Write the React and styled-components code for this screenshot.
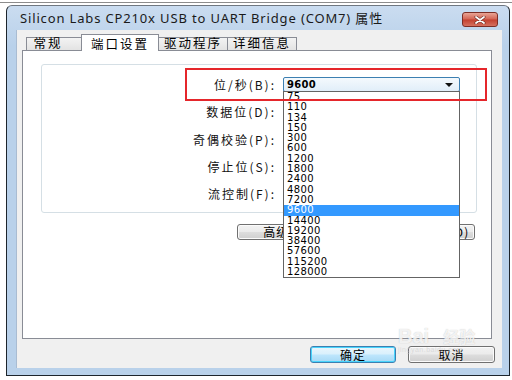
import React from 'react';
import styled, { createGlobalStyle } from 'styled-components';

const CJK = `"Noto Sans CJK SC", "Noto Sans", sans-serif`;

const GlobalStyle = createGlobalStyle`
  html, body {
    margin: 0;
    padding: 0;
    background: #fff;
  }
  body {
    width: 512px;
    height: 380px;
    overflow: hidden;
  }
`;

const Page = styled.div`
  position: relative;
  width: 512px;
  height: 380px;
  padding-top: 2px;
  box-sizing: border-box;
  background: #fff;
`;

const TopRule = styled.div`
  height: 1px;
  background: #8c8c8c;
`;

const Window = styled.div`
  margin: 2px 0 0 6px;
  width: 504px;
  height: 371px;
  box-sizing: border-box;
  border: 1px solid #1d252c;
  border-top-color: #6f7780;
  border-radius: 6px 6px 0 0;
  background: linear-gradient(#cadcf0, #b9d1ea 40px);
  display: flex;
  flex-direction: column;
`;

const TitleBar = styled.div`
  height: 24px;
  flex: none;
  display: flex;
  align-items: center;
  padding: 0 11px 0 13px;
`;

const Title = styled.div`
  flex: 1;
  font-family: "Noto Sans", ${CJK};
  font-size: 13px;
  letter-spacing: 0.85px;
  color: #1a1a1a;
  white-space: nowrap;
  margin-top: -1px;
`;

const CloseButton = styled.div`
  width: 36px;
  height: 15px;
  margin-top: 3px;
  box-sizing: border-box;
  border: 1px solid #7c2e26;
  border-radius: 3px;
  background: linear-gradient(#e9a495, #d36352 48%, #c3402f 52%, #d5705f);
  display: flex;
  align-items: center;
  justify-content: center;
`;

const Client = styled.div`
  flex: 1;
  margin: 0 7px 7px 9px;
  background: #f0f0f0;
  border-left: 1px solid #a9bcd2;
  padding: 4px 0 0 5px;
  display: flex;
  flex-direction: column;
`;

const TabStrip = styled.div`
  position: relative;
  z-index: 2;
  height: 16px;
  display: flex;
  align-items: flex-end;
  padding-left: 4px;
`;

const Tab = styled.div`
  width: ${p => p.$w}px;
  height: ${p => (p.$active ? 17 : 13)}px;
  margin-bottom: ${p => (p.$active ? -1 : 0)}px;
  margin-left: ${p => (p.$first ? 0 : -1)}px;
  box-sizing: border-box;
  border: 1px solid #898c95;
  border-bottom: none;
  background: ${p => (p.$active ? '#fff' : 'linear-gradient(#f3f3f3, #e3e3e3)')};
  position: relative;
  z-index: ${p => (p.$active ? 2 : 1)};
  display: flex;
  align-items: flex-end;
  justify-content: center;
  padding-right: ${p => p.$shift || 0}px;
  font-family: ${CJK};
  font-size: 12.5px;
  letter-spacing: 2px;
  line-height: 14px;
  color: #000;
`;

const Panel = styled.div`
  width: 470px;
  height: 289px;
  box-sizing: border-box;
  border: 1px solid #898c95;
  background: #fff;
  padding: 13px 0 0 18px;
  display: flex;
  flex-direction: column;
`;

const GroupBox = styled.div`
  width: 436px;
  height: 149px;
  box-sizing: border-box;
  border: 1px solid #d5dfe5;
  border-radius: 3px;
  padding-top: 12px;
`;

const Form = styled.div`
  display: grid;
  grid-template-columns: 232px 177px;
  column-gap: 9px;
  row-gap: 12.3px;
  align-items: center;
`;

const Label = styled.div`
  text-align: right;
  margin-right: -2px;
  font-family: ${CJK};
  font-size: 12px;
  letter-spacing: 2px;
  line-height: 15px;
  color: #111;
  white-space: nowrap;
`;

const Combo = styled.div`
  position: relative;
  height: 15px;
  box-sizing: border-box;
  border: 1px solid ${p => (p.$focused ? '#3c7fb1' : '#8e8f8f')};
  border-radius: 2px;
  background: ${p => (p.$focused ? 'linear-gradient(#f4f9fd, #e1eef9)' : 'linear-gradient(#f2f2f2, #dcdcdc)')};
  display: flex;
  align-items: center;
  padding: 0 6px 0 3px;
  font-family: "DejaVu Sans", sans-serif;
  font-weight: bold;
  font-size: 10px;
  color: #000;
`;

const ComboValue = styled.span`
  flex: 1;
  letter-spacing: 0.3px;
`;

const Arrow = styled.span`
  width: 0;
  height: 0;
  border-left: 4px solid transparent;
  border-right: 4px solid transparent;
  border-top: 4px solid #111;
`;

const DropList = styled.div`
  position: absolute;
  z-index: 5;
  top: 100%;
  left: -1px;
  width: 177px;
  box-sizing: border-box;
  border: 1px solid #646464;
  background: #fff;
  font-family: "DejaVu Sans", sans-serif;
  font-weight: normal;
`;

const DropItem = styled.div`
  height: 10.3px;
  line-height: 10.3px;
  padding-left: 3px;
  font-size: 10px;
  letter-spacing: 0.4px;
  color: ${p => (p.$selected ? '#fff' : '#000')};
  background: ${p => (p.$selected ? '#3399ff' : 'transparent')};
`;

const ButtonRow = styled.div`
  margin-top: 11px;
  width: 434px;
  display: flex;
  justify-content: flex-end;
  gap: 8px;
`;

const Button = styled.div`
  width: ${p => p.$w}px;
  height: ${p => p.$h || 16}px;
  box-sizing: border-box;
  padding-left: ${p => p.$indent || 0}px;
  border: 1px solid ${p => (p.$default ? '#3c7fb1' : '#707070')};
  border-radius: 3px;
  box-shadow: ${p => (p.$default ? 'inset 0 0 0 1px #48d4fc' : 'inset 0 0 0 1px #fbfbfb')};
  background: ${p =>
    p.$default
      ? 'linear-gradient(#eaf6fd, #d9f0fc 48%, #bee6fd 52%, #a7d9f5)'
      : 'linear-gradient(#f2f2f2, #ebebeb 48%, #dddddd 52%, #cfcfcf)'};
  display: flex;
  align-items: center;
  justify-content: center;
  font-family: ${CJK};
  font-size: 12px;
  letter-spacing: 1px;
  line-height: 14px;
  color: #000;
  white-space: nowrap;
`;

const BottomBar = styled.div`
  margin-top: 7px;
  width: 473px;
  display: flex;
  justify-content: flex-end;
  gap: 12px;
`;

const Highlight = styled.div`
  position: absolute;
  left: 185px;
  top: 68px;
  width: 302px;
  height: 33px;
  box-sizing: border-box;
  border: 2px solid #e5262b;
  pointer-events: none;
  z-index: 10;
`;

const Watermark = styled.div`
  position: absolute;
  left: 398px;
  top: 326px;
  z-index: 9;
  display: flex;
  flex-direction: column;
  align-items: flex-start;
  color: rgba(255, 255, 255, 0.8);
  text-shadow: 0 0 1px rgba(120, 120, 120, 0.45);
  pointer-events: none;
`;

const MarkLine = styled.div`
  display: flex;
  align-items: flex-end;
  font-family: "Liberation Sans", sans-serif;
  font-weight: bold;
  font-size: 20px;
  line-height: 20px;
`;

const MarkCJK = styled.span`
  font-family: ${CJK};
  font-size: 16px;
  margin-left: 14px;
`;

const MarkUrl = styled.div`
  font-family: "Liberation Sans", sans-serif;
  font-size: 7px;
  line-height: 8px;
  letter-spacing: 0.5px;
  color: rgba(200, 200, 200, 0.55);
  text-shadow: none;
`;

const rates = ['75', '110', '134', '150', '300', '600', '1200', '1800', '2400', '4800', '7200', '9600',
  '14400', '19200', '38400', '57600', '115200', '128000'];

// only the first combo shows a value; the others sit under the open list
const fields = [
  { label: '位/秒(B):', value: '9600', open: true },
  { label: '数据位(D):' },
  { label: '奇偶校验(P):' },
  { label: '停止位(S):' },
  { label: '流控制(F):' },
];

const CloseIcon = () => (
  <svg width="12" height="8" viewBox="0 0 12 8">
    <path d="M2 1 L10 7 M10 1 L2 7" stroke="#6b2a22" strokeWidth="3" strokeLinecap="round" />
    <path d="M2 1 L10 7 M10 1 L2 7" stroke="#fff" strokeWidth="1.8" strokeLinecap="round" />
  </svg>
);

const App = () => (
  <Page>
    <GlobalStyle />
    <TopRule />
    <Window>
      <TitleBar>
        <Title>Silicon Labs CP210x USB to UART Bridge (COM7) 属性</Title>
        <CloseButton>
          <CloseIcon />
        </CloseButton>
      </TitleBar>
      <Client>
        <TabStrip>
          <Tab $w={56} $first $shift={12}>常规</Tab>
          <Tab $w={78} $active>端口设置</Tab>
          <Tab $w={70}>驱动程序</Tab>
          <Tab $w={70}>详细信息</Tab>
        </TabStrip>
        <Panel>
          <GroupBox>
            <Form>
              {fields.map(f => (
                <React.Fragment key={f.label}>
                  <Label>{f.label}</Label>
                  <Combo $focused={f.open}>
                    <ComboValue>{f.value}</ComboValue>
                    <Arrow />
                    {f.open && (
                      <DropList>
                        {rates.map(r => (
                          <DropItem key={r} $selected={r === f.value}>{r}</DropItem>
                        ))}
                      </DropList>
                    )}
                  </Combo>
                </React.Fragment>
              ))}
            </Form>
          </GroupBox>
          <ButtonRow>
            <Button $w={110}>高级(A)...</Button>
            <Button $w={120} $indent={24}>还原默认值(D)</Button>
          </ButtonRow>
        </Panel>
        <BottomBar>
          <Button $w={86} $h={17} $default>确定</Button>
          <Button $w={87} $h={17}>取消</Button>
        </BottomBar>
      </Client>
    </Window>
    <Highlight />
    <Watermark>
      <MarkLine>
        Bai<MarkCJK>经验</MarkCJK>
      </MarkLine>
      <MarkUrl>jingyan.baidu.com</MarkUrl>
    </Watermark>
  </Page>
);

export default App;
